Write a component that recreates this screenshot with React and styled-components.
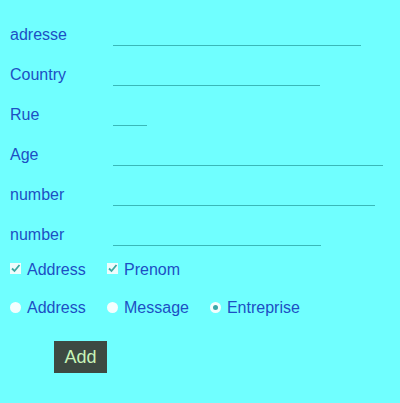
import React, { useState } from "react";
import styled, { createGlobalStyle } from "styled-components";

const GlobalStyle = createGlobalStyle`
  html, body {
    margin: 0;
    padding: 0;
    background-color: #70ffff;
  }
  body {
    font-family: "Liberation Sans", Arial, sans-serif;
  }
`;

const fields = [
  { label: "adresse", width: 248 },
  { label: "Country", width: 207 },
  { label: "Rue", width: 34 },
  { label: "Age", width: 270 },
  { label: "number", width: 262 },
  { label: "number", width: 208 },
];

const App = () => {
  const [values, setValues] = useState(fields.map(() => ""));
  const [checks, setChecks] = useState([true, true]);
  const [radio, setRadio] = useState(2);

  const onChange = (i, e) => {
    const v = [...values];
    v[i] = e.target.value;
    setValues(v);
  };

  const toggle = (i) => {
    const c = [...checks];
    c[i] = !c[i];
    setChecks(c);
  };

  return (
    <Container>
      <GlobalStyle />
      <Form>
        {fields.map((f, i) => (
          <Row key={i}>
            <Label>{f.label}</Label>
            <Input
              w={f.width}
              value={values[i]}
              onChange={(e) => onChange(i, e)}
            />
          </Row>
        ))}

        <Choices>
          {["Address", "Prenom"].map((t, i) => (
            <Choice key={t} onClick={() => toggle(i)}>
              <Box>
                {checks[i] ? (
                  <svg width="11" height="11" viewBox="0 0 11 11">
                    <path
                      d="M2 5.5 L4.5 8 L9.5 2"
                      stroke="#3aa8a0"
                      strokeWidth="1.8"
                      fill="none"
                    />
                  </svg>
                ) : null}
              </Box>
              {t}
            </Choice>
          ))}
        </Choices>

        <Choices radios>
          {["Address", "Message", "Entreprise"].map((t, i) => (
            <Choice key={t} onClick={() => setRadio(i)}>
              <Dot>{radio === i ? <Inner /> : null}</Dot>
              {t}
            </Choice>
          ))}
        </Choices>

        <Button>Add</Button>
      </Form>
    </Container>
  );
};

export default App;

const Container = styled.div`
  width: 100%;
  min-height: 403px;
  background-color: #70ffff;
`;

const Form = styled.div`
  display: flex;
  flex-direction: column;
  padding: 6px 0 0 10px;
`;

const Row = styled.div`
  display: flex;
  align-items: flex-end;
  height: 40px;
`;

const Label = styled.div`
  width: 103px;
  color: #1d4fc4;
  font-size: 16px;
  line-height: 18px;
  padding-bottom: 2px;
`;

const Input = styled.input`
  width: ${({ w }) => w}px;
  height: 20px;
  padding: 0;
  border: none;
  border-bottom: 1px solid #3ab8b8;
  background: transparent;
  outline: none;
  font-size: 15px;
  color: #1d4fc4;
`;

const Choices = styled.div`
  display: flex;
  gap: 21px;
  margin-top: ${({ radios }) => (radios ? "18px" : "14px")};
  height: 20px;
  align-items: center;
`;

const Choice = styled.div`
  display: flex;
  align-items: center;
  gap: 6px;
  color: #1d4fc4;
  font-size: 16px;
  cursor: pointer;
  min-width: 76px;
`;

const Box = styled.span`
  width: 11px;
  height: 11px;
  background: #eefcfc;
  display: flex;
  align-items: center;
  justify-content: center;
  margin-top: -3px;
`;

const Dot = styled.span`
  width: 11px;
  height: 11px;
  border-radius: 50%;
  background: #f4fefe;
  display: flex;
  align-items: center;
  justify-content: center;
  margin-top: -2px;
`;

const Inner = styled.span`
  width: 5px;
  height: 5px;
  border-radius: 50%;
  background: #3aa8a8;
`;

const Button = styled.button`
  align-self: flex-start;
  margin: 23px 0 0 44px;
  width: 53px;
  height: 32px;
  background-color: #3d4a42;
  color: #c8f5b8;
  border: none;
  font-family: "Liberation Sans", Arial, sans-serif;
  font-size: 18px;
  padding: 0;
  cursor: pointer;
`;
